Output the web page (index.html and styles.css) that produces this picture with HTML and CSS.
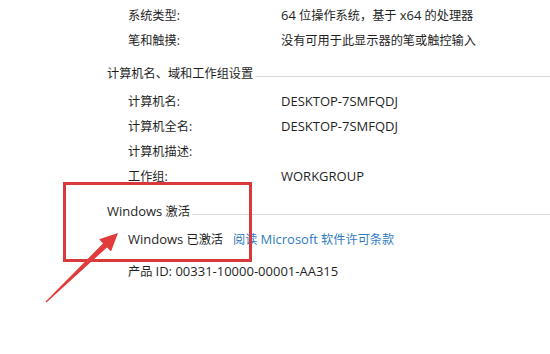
FILE: index.html
```html
<!DOCTYPE html>
<html lang="zh-CN">
<head>
<meta charset="utf-8">
<link rel="stylesheet" href="styles.css">
</head>
<body>
<div class="page">
  <div class="group">
    <div class="row"><span class="label">系统类型:</span><span class="value"><span class="lat">64</span> 位操作系统，基于 <span class="lat">x64</span> 的处理器</span></div>
    <div class="row"><span class="label">笔和触摸:</span><span class="value">没有可用于此显示器的笔或触控输入</span></div>
  </div>
  <div class="section">
    <div class="head"><span class="head-text">计算机名、域和工作组设置</span><span class="rule"></span></div>
    <div class="row"><span class="label">计算机名:</span><span class="value lat">DESKTOP-7SMFQDJ</span></div>
    <div class="row"><span class="label">计算机全名:</span><span class="value lat">DESKTOP-7SMFQDJ</span></div>
    <div class="row"><span class="label">计算机描述:</span><span class="value"></span></div>
    <div class="row"><span class="label">工作组:</span><span class="value lat">WORKGROUP</span></div>
  </div>
  <div class="section activation">
    <div class="head"><span class="head-text"><span class="lat">Windows</span> 激活</span><span class="rule"></span></div>
    <div class="row"><span class="act"><span class="lat">Windows</span> 已激活</span><a class="link">阅读 <span class="lat">Microsoft</span> 软件许可条款</a></div>
    <div class="row pid-row"><span class="act">产品 <span class="lat">ID: 00331-10000-00001-AA315</span></span></div>
  </div>

  <div class="mark-box"></div>
  <svg class="mark-arrow" width="550" height="354" viewBox="0 0 550 354">
    <polygon points="45.6,301.6 103.0,243.4 99.2,239.2 118,233 111,251.6 107,247.4 46.4,302.4" fill="#e23b3c"/>
  </svg>
</div>
</body>
</html>
```

FILE: styles.css
```css
html, body {
  margin: 0;
  padding: 0;
  background: #ffffff;
}
.page {
  position: relative;
  width: 550px;
  height: 354px;
  overflow: hidden;
  font-family: "Segoe UI", "Open Sans", "Noto Sans CJK SC", sans-serif;
  font-size: 12.2px;
  color: #1f1f1f;
}
.lat {
  font-size: 13px;
}
.group {
  padding-top: 2px;
}
.row {
  display: flex;
  height: 25px;
  align-items: center;
  padding-left: 128px;
}
.label {
  width: 153px;
  flex: none;
}
.value {
  flex: 1;
}
.section {
  margin-top: 8px;
}
.head {
  display: flex;
  height: 25px;
  align-items: center;
  padding-left: 107px;
  margin-bottom: 3px;
}
.head-text {
  flex: none;
}
.rule {
  flex: 1;
  height: 1px;
  background: #d9d9d9;
  margin-left: 2px;
  margin-top: 7px;
}
.activation {
  margin-top: 10px;
}
.act {
  flex: none;
}
.link {
  margin-left: 10px;
  color: #2e7bbf;
}
.pid-row {
  margin-top: 7px;
}
.mark-box {
  position: absolute;
  left: 63px;
  top: 182px;
  width: 183px;
  height: 74px;
  border: 3px solid #d9393b;
}
.mark-arrow {
  position: absolute;
  left: 0;
  top: 0;
}
```
